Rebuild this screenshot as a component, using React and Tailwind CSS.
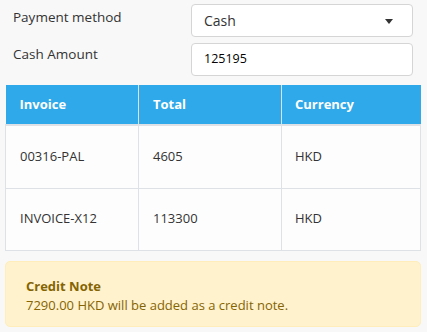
import React from 'react';

const rows = [
  { invoice: '00316-PAL', total: '4605', currency: 'HKD', h: 'h-[63px]' },
  { invoice: 'INVOICE-X12', total: '113300', currency: 'HKD', h: 'h-[62px]' },
];

const App = () => {
  return (
    <div className="w-[427px] h-[332px] bg-[#f8f8f8] text-[13px] text-[#333] font-['Open_Sans',sans-serif] overflow-hidden">
      <div className="flex items-start pt-[4px] pl-[13px] pr-[14px]">
        <label className="flex-1 pt-[3px] leading-[20px] text-[13.5px]">Payment method</label>
        <div className="w-[222px] h-[33px] bg-white border border-[#d5d5d5] rounded-[4px] flex items-center justify-between pl-[12px] pr-[19px] text-[14px]">
          <span>Cash</span>
          <span className="mt-[1px] w-0 h-0 border-l-[4px] border-r-[4px] border-t-[5px] border-l-transparent border-r-transparent border-t-[#333]" />
        </div>
      </div>
      <div className="flex items-start pt-[6px] pl-[13px] pr-[14px]">
        <label className="flex-1 pt-[1px] leading-[20px] text-[13.5px]">Cash Amount</label>
        <div className="w-[222px] h-[33px] bg-white border border-[#d5d5d5] rounded-[4px] flex items-center pl-[12px] text-black text-[12.5px]">
          125195
        </div>
      </div>

      <table className="mt-[9px] ml-[5px] w-[416px] border-collapse table-fixed">
        <thead>
          <tr className="bg-[#2fa9e9] text-white font-bold h-[40px]">
            <th className="w-[133px] text-left pl-[14px] border-r border-[#dee2e6] border-b-2">Invoice</th>
            <th className="w-[143px] text-left pl-[14px] border-r border-[#dee2e6] border-b-2">Total</th>
            <th className="text-left pl-[13px] border-b-2 border-[#dee2e6]">Currency</th>
          </tr>
        </thead>
        <tbody>
          {rows.map((r) => (
            <tr key={r.invoice} className={`${r.h} bg-[#fdfdfd]`}>
              <td className="pl-[14px] border border-[#dee2e6]">{r.invoice}</td>
              <td className="pl-[14px] border border-[#dee2e6]">{r.total}</td>
              <td className="pl-[13px] border border-[#dee2e6]">{r.currency}</td>
            </tr>
          ))}
        </tbody>
      </table>

      <div className="mt-[10px] ml-[5px] w-[416px] h-[66px] bg-[#fff2cc] border border-[#ffeebb] rounded-[5px] pl-[20px] pt-[15px] text-[#856404] leading-[19px]">
        <div className="font-bold">Credit Note</div>
        <div>7290.00 HKD will be added as a credit note.</div>
      </div>
    </div>
  );
};

export default App;
